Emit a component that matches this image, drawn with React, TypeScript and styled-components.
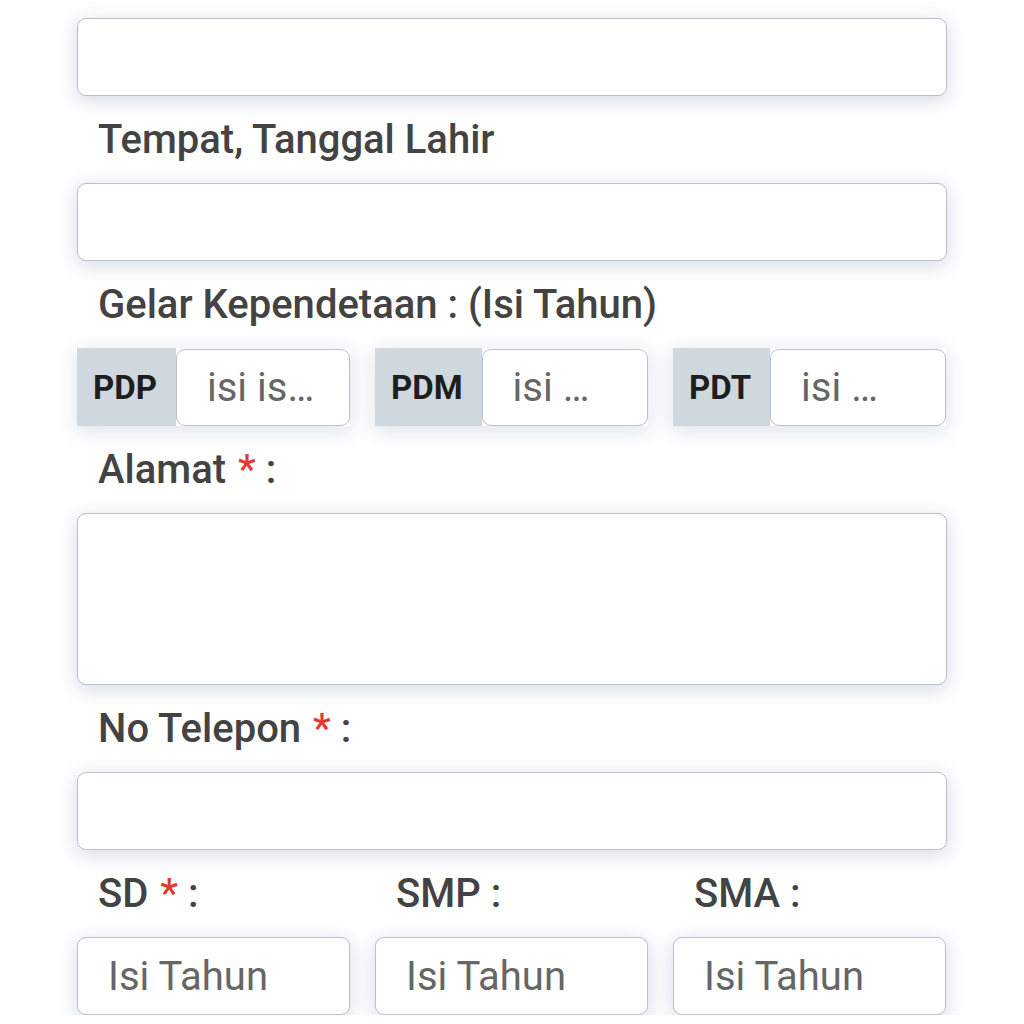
import React from "react";
import styled, { createGlobalStyle } from "styled-components";

const Global = createGlobalStyle`
  html, body { margin: 0; padding: 0; background: #ffffff; }
  body { font-family: Roboto, "Noto Sans", "Liberation Sans", sans-serif; }
  * { box-sizing: border-box; }
`;

const Form = styled.div`
  width: 870px;
  margin: 0 auto 0 77px;
  padding-top: 18px;
  display: flex;
  flex-direction: column;
`;

const Label = styled.div`
  font-size: 40px;
  line-height: 45px;
  font-weight: 500;
  color: #434343;
  padding-left: 21px;
  margin: 21px 0 21px;
  white-space: nowrap;
`;

const Star = styled.span`
  color: #e53935;
  margin: 0 10px 0 12px;
`;

const Field = styled.div<{ $h?: number }>`
  height: ${(p) => p.$h ?? 78}px;
  background: #ffffff;
  border: 1.5px solid #b9c0c8;
  border-radius: 9px;
  box-shadow: 0 4px 18px 2px rgba(80, 115, 155, 0.22);
  display: flex;
  align-items: center;
  padding-left: 30px;
  font-size: 40px;
  color: #666666;
  white-space: nowrap;
`;

const Row = styled.div`
  display: grid;
  grid-template-columns: repeat(3, 273px);
  column-gap: 25px;
`;

const Group = styled.div`
  display: flex;
  height: 78px;
  box-shadow: 0 4px 18px 2px rgba(80, 115, 155, 0.18);
`;

const Addon = styled.div`
  background: #cfd8de;
  display: flex;
  align-items: center;
  padding: 0 19px 0 16px;
  font-size: 33px;
  font-weight: 700;
  color: #1e1e1e;
  flex: none;
`;

const AddonInput = styled(Field)`
  flex: 1;
  height: 77px;
  align-self: center;
  box-shadow: none;
`;

const LabelRow = styled(Row)`
  margin: 21px 0 21px;
`;

const ColLabel = styled(Label)`
  margin: 0;
`;

export default function App() {
  return (
    <>
      <Global />
      <Form>
        <Field />
        <Label>Tempat, Tanggal Lahir</Label>
        <Field />
        <Label>Gelar Kependetaan : (Isi Tahun)</Label>
        <Row>
          <Group>
            <Addon>PDP</Addon>
            <AddonInput>isi is…</AddonInput>
          </Group>
          <Group>
            <Addon>PDM</Addon>
            <AddonInput>isi …</AddonInput>
          </Group>
          <Group>
            <Addon>PDT</Addon>
            <AddonInput>isi …</AddonInput>
          </Group>
        </Row>
        <Label>
          Alamat<Star>*</Star>:
        </Label>
        <Field $h={172} />
        <Label>
          No Telepon<Star>*</Star>:
        </Label>
        <Field />
        <LabelRow>
          <ColLabel>
            SD<Star>*</Star>:
          </ColLabel>
          <ColLabel>SMP :</ColLabel>
          <ColLabel>SMA :</ColLabel>
        </LabelRow>
        <Row>
          <Field>Isi Tahun</Field>
          <Field>Isi Tahun</Field>
          <Field>Isi Tahun</Field>
        </Row>
      </Form>
    </>
  );
}
